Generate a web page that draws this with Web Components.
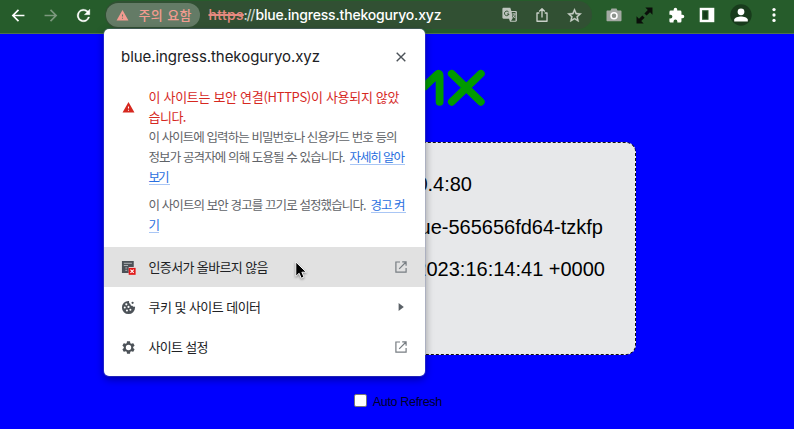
<!DOCTYPE html>
<html lang="ko"><head><meta charset="utf-8"><title>blue.ingress.thekoguryo.xyz</title>
<style>html,body{margin:0;height:100%;overflow:hidden;background:#00f}</style></head>
<body><browser-window></browser-window>
<script>
const define=(name,html,init)=>customElements.define(name,class extends HTMLElement{
  constructor(){super();this.attachShadow({mode:'open'}).innerHTML=html}
  connectedCallback(){if(init)init(this)}
});

// One line of text, tracked so that it fills the width in its "w" attribute.
define('fit-line','<style>:host{display:inline-block;white-space:pre;flex:none}span{display:inline-block}:host([struck]) span{text-decoration:line-through;text-decoration-thickness:1.5px}</style><span><slot></slot></span>',el=>{
  const s=el.shadowRoot.querySelector('span'),w=+el.getAttribute('w');
  const n=[...el.textContent].length;
  const natural=s.getBoundingClientRect().width;
  s.style.letterSpacing=((w-natural)/Math.max(1,n-1))+'px';
  el.style.width=w+'px';
});

const icons={
 back:[20,'<path d="M17 10H3.500M10 3.400 3.400 10l6.600 6.600" fill="none" stroke="currentColor" stroke-width="2"/>'],
 forward:[20,'<path d="M3 10h13.500M10 3.400l6.600 6.600-6.600 6.600" fill="none" stroke="currentColor" stroke-width="2"/>'],
 reload:[24,'<path fill="currentColor" stroke="currentColor" stroke-width=".4" d="M17.65 6.35A8 8 0 1 0 19.73 14h-2.08A6 6 0 1 1 12 6c1.66 0 3.14.69 4.22 1.78L13 11h7V4z"/>'],
 warn:[24,'<path fill="currentColor" d="M1 21h22L12 2zm12-3h-2v-2h2zm0-4h-2v-4h2z"/>'],
 translate:[16,'<path fill="#bfc6bf" d="M1.3.8h7l1.1 3.1h4.3c.7 0 1.2.5 1.2 1.2v8.5c0 .7-.5 1.2-1.2 1.2H8l-1-3H1.5C.8 11.800.4 11.300.4 10.600V1.9C.4 1.200.7.8 1.3.8z"/><path fill="#315033" d="M9.700 5h3.800v8.700H9l1.600-2.100z"/><path d="M6.600 5A2.300 2.300 0 1 0 7 7H4.900" fill="none" stroke="#315033" stroke-width="1"/><path d="M10.200 7h3.500M12 6v1M13 7.200l-2.300 3.600M11 8.400l2 2.600" fill="none" stroke="#bfc6bf" stroke-width=".9"/>'],
 share:[16,'<path d="M5.300 6H3v8.200h10V6h-2.300M8 10.500V2M5.200 4.600 8 1.800l2.800 2.800" fill="none" stroke="currentColor" stroke-width="1.35" stroke-linejoin="round"/>'],
 star:[24,'<path fill="currentColor" stroke="currentColor" stroke-width=".5" d="m22 9.240-7.190-.62L12 2 9.190 8.630 2 9.240l5.460 4.730L5.820 21 12 17.270 18.180 21l-1.630-7.030zM12 15.400l-3.760 2.270 1-4.280-3.320-2.880 4.380-.38L12 6.100l1.710 4.040 4.380.38-3.320 2.880 1 4.280z"/>'],
 camera:[16,'<path fill="#a4aaa4" d="M1.500 3.500h3l1-1.900h5l1 1.900h3c.6 0 1 .4 1 1v8.800c0 .6-.4 1-1 1h-13c-.6 0-1-.4-1-1V4.500c0-.6.4-1 1-1z"/><circle cx="8" cy="8.800" r="3" fill="#8c938c" stroke="#fff" stroke-width="1.500"/>'],
 expand:[16,'<path fill="#0a0e0a" d="M8.800.5h6.700v6.700l-2.300-2.300-3.200 3.200L7.900 6l3.200-3.200zM7.200 15.500H.5V8.800l2.300 2.300L6 7.900 8.100 10l-3.200 3.200z"/>'],
 puzzle:[24,'<path fill="currentColor" d="M20.500 11H19V7a2 2 0 0 0-2-2h-4V3.500a2.500 2.500 0 0 0-5 0V5H4a2 2 0 0 0-2 2v3.800h1.500a2.700 2.700 0 0 1 0 5.400H2V20c0 1.100.9 2 2 2h3.800v-1.500a2.700 2.700 0 0 1 5.400 0V22H17a2 2 0 0 0 2-2v-4h1.500a2.500 2.500 0 0 0 0-5z"/>'],
 panel:[16,'<path fill="#fff" d="M.7.800h14.600v14.400H.700z"/><path fill="#265c2b" d="M3.100 3.200h6.400v9.600H3.100z"/><path fill="#153c19" d="M4.300 4.300h4v7.400h-4z"/>'],
 avatar:[22,'<circle cx="11" cy="11" r="10.700" fill="#183b1c"/><circle cx="11" cy="7.800" r="3.400" fill="#fff"/><path fill="#fff" d="M4.200 17.400v-1.600c0-2.200 4.300-3.400 6.800-3.400s6.800 1.200 6.800 3.400v1.600z"/>'],
 dots:[16,'<g fill="#fff"><circle cx="8" cy="2.600" r="1.650"/><circle cx="8" cy="8" r="1.650"/><circle cx="8" cy="13.400" r="1.650"/></g>'],
 close:[12,'<path d="m1.700 1.700 8.600 8.600m0-8.600-8.600 8.600" fill="none" stroke="currentColor" stroke-width="1.400"/>'],
 cert:[16,'<path fill="#4c5258" d="M1 1h12.600v6.500H8.200v6.300H1z"/><path d="M3 3.500h8.600M3 5.900h4.500M4.600 8.500h2M4.600 11h2" stroke="#c3c5c7" stroke-width=".9"/><path fill="#e21818" d="M8.200 8.400h7.400v7.400H8.200z"/><path d="m10.100 10.300 3.500 3.500m0-3.500-3.500 3.500" stroke="#fff" stroke-width="1.200"/>'],
 cookie:[24,'<path fill="#4c5258" d="M12 1.500A10.500 10.500 0 1 0 22.500 12c0-.6 0-1.100-.1-1.600-1.300 1-3.500.6-4-1.200-2 .5-3.700-1-3.300-3-1.900-.4-2.700-2.200-2.100-4.600z"/><g fill="#fff"><circle cx="8.500" cy="6.900" r="1.700"/><circle cx="6" cy="12" r="1.600"/><circle cx="12" cy="11" r="1.700"/><circle cx="9.500" cy="16.700" r="1.700"/><circle cx="15" cy="15.400" r="1.600"/></g><circle cx="18.500" cy="4.500" r="1.800" fill="#4c5258"/>'],
 gear:[24,'<path fill="#4c5258" fill-rule="evenodd" d="M19.430 12.980c.04-.32.07-.64.07-.98s-.03-.66-.07-.98l2.110-1.650c.19-.15.24-.42.12-.64l-2-3.460c-.12-.22-.39-.3-.61-.22l-2.490 1c-.52-.4-1.080-.73-1.690-.98l-.38-2.650A.49.490 0 0 0 14 2h-4c-.25 0-.46.18-.49.42l-.38 2.650c-.61.25-1.170.59-1.690.98l-2.490-1c-.23-.09-.49 0-.61.22l-2 3.460c-.13.22-.07.49.12.64l2.110 1.650c-.04.32-.07.65-.07.98s.03.66.07.98l-2.110 1.650c-.19.15-.24.42-.12.64l2 3.460c.12.22.39.3.61.22l2.490-1c.52.4 1.080.73 1.690.98l.38 2.650c.03.24.24.42.49.42h4c.25 0 .46-.18.49-.42l.38-2.650c.61-.25 1.170-.59 1.690-.98l2.490 1c.23.09.49 0 .61-.22l2-3.460c.12-.22.07-.49-.12-.64zM12 16.300a4.300 4.300 0 1 1 0-8.600 4.300 4.300 0 0 1 0 8.600z"/>'],
 open:[12,'<path d="M5 1H.9v10.200h10.200V7M7.200.9h3.900v3.900M11 1 4.200 7.800" fill="none" stroke="#777d82" stroke-width="1.200"/>'],
 play:[12,'<path fill="#5b6167" d="M3.600 2.100v7.800L8.800 6z"/>'],
 cursor:[20,'<path d="M4 1v15.200l3.500-3.300 2.200 5.200 2.900-1.200-2.200-5.100h4.700z" fill="#000" stroke="#fff" stroke-width="1"/>']
};
define('ui-icon','<style>:host{display:block;flex:none}svg{display:block}</style><div></div>',el=>{
  const [v,p]=icons[el.getAttribute('name')],s=el.getAttribute('size');
  el.shadowRoot.querySelector('div').innerHTML=`<svg width="${s}" height="${s}" viewBox="0 0 ${v} ${v}">${p}</svg>`;
});

define('address-bar',`<style>
:host{display:flex;align-items:center;width:487px;height:28px;box-sizing:border-box;border-radius:14px;background:#315033;padding:0 9px 0 1px;color:#c9d0c9}
.chip{display:flex;align-items:center;box-sizing:border-box;width:94px;height:24px;border-radius:12px;background:#647b66;color:#f29b90;padding-left:10px;gap:9.500px;font:500 13px/24px "Noto Sans CJK KR",sans-serif}
.url{display:flex;margin-left:8.500px;font:500 14px/24px Inter,sans-serif;flex:1}
.bad{color:#e58a80}.host{color:#fff}
.icons{display:flex;gap:16px}
</style><div class="chip"><ui-icon name="warn" size="13"></ui-icon><fit-line w="53">주의 요함</fit-line></div>
<div class="url"><fit-line struck class="bad" w="35">https</fit-line><fit-line w="12">://</fit-line><fit-line class="host" w="186">blue.ingress.thekoguryo.xyz</fit-line></div>
<div class="icons"><ui-icon name="translate" size="16"></ui-icon><ui-icon name="share" size="16"></ui-icon><ui-icon name="star" size="17"></ui-icon></div>`);

define('browser-toolbar',`<style>
:host{display:flex;align-items:center;height:34px;box-sizing:border-box;background:#265c2b;border-bottom:1px solid #4d704f;padding:0 12px 3px 10px;color:#fff}
.nav{display:flex;align-items:center;gap:15px;width:95px}.dim{color:#7c987e}
.ext{display:flex;align-items:center;margin-left:14px;flex:1;justify-content:space-between}
</style><div class="nav"><ui-icon name="back" size="17"></ui-icon><ui-icon class="dim" name="forward" size="17"></ui-icon><ui-icon name="reload" size="19"></ui-icon></div>
<address-bar></address-bar>
<div class="ext"><ui-icon name="camera" size="16"></ui-icon><ui-icon name="expand" size="17"></ui-icon><ui-icon name="puzzle" size="17"></ui-icon><ui-icon name="panel" size="16"></ui-icon><ui-icon name="avatar" size="22"></ui-icon><ui-icon name="dots" size="16"></ui-icon></div>`);

define('server-page',`<style>
:host{display:flex;flex-direction:column;align-items:center;height:395px;background:#00f;font-family:"Liberation Sans",sans-serif}
.logo{display:block;margin-top:35px;width:178px;height:38px}
.card{box-sizing:border-box;width:478px;height:213px;margin-top:35px;border:1px dashed #111;border-radius:10px;background:#e7e8ea;padding:20px 30px 0;display:flex;flex-direction:column;align-items:flex-end;font-size:20px;line-height:42.500px;color:#000}
.card div{white-space:pre}
.a{margin-right:133px}.b{margin-right:2px}
.check{display:flex;align-items:center;height:18px;margin:37px 0 0 2px;color:#00002c;font-size:12.500px;gap:6px}
.check fit-line{margin-top:2px}
.check i{display:block;box-sizing:border-box;width:13px;height:13px;border:1px solid #777;border-radius:2px;background:#fff;margin-top:-2px}
</style><svg class="logo" viewBox="0 0 178 38"><path d="M112.500 32V6L123 17.500 135 6q2.800-2.500 2.800 1V33M150 5l29 28M179 5 150 33" transform="translate(-6.200 -.2)" fill="none" stroke="#009a00" stroke-width="7.800" stroke-linecap="round" stroke-linejoin="round"/></svg>
<div class="card"><div class="a">0.4:80</div><div class="b">blue-565656fd64-tzkfp</div><div>2023:16:14:41 +0000</div></div>
<div class="check"><i></i><fit-line w="69.500">Auto Refresh</fit-line></div>`);

define('menu-row',`<style>
:host{display:flex;align-items:center;height:40px;box-sizing:border-box;padding:0 18px 0 17px;color:#202124;font:400 13px/20px "Noto Sans CJK KR",sans-serif}
:host([active]){background:#e1e1e1}.t{flex:1;margin-left:12.500px}
</style><slot name="icon"></slot><div class="t"><slot></slot></div><slot name="end"></slot>`);

define('site-info-popover',`<style>
:host{display:block;position:absolute;left:104px;top:29px;width:320.500px;height:347px;box-sizing:border-box;background:#fff;border-radius:5px;box-shadow:0 0 0 1px #7b86c540,0 3px 9px #0006;font:400 12.500px/20px "Noto Sans CJK KR",sans-serif;color:#5f6368}
header{display:flex;align-items:center;justify-content:space-between;height:56px;padding:0 18px 0 17px;color:#202124;font:400 15px/20px Inter,sans-serif}
header ui-icon{color:#4c5258}
.warn{display:flex;padding-left:18px;height:162px}
.warn>ui-icon{color:#d6281f;margin-top:16px}
.body{margin-left:13.500px;padding-top:2px}
.line{display:flex;height:20px;gap:4px}.red{color:#d6281f;font-size:13px}.gap{margin-top:8px}
.link{color:#2a6fe0;height:17.500px;box-sizing:border-box;border-bottom:1px solid #a9c6f5}
</style>
<header><fit-line w="199">blue.ingress.thekoguryo.xyz</fit-line><ui-icon name="close" size="12"></ui-icon></header>
<div class="warn"><ui-icon name="warn" size="13"></ui-icon><div class="body">
<div class="line red"><fit-line w="251">이 사이트는 보안 연결(HTTPS)이 사용되지 않았</fit-line></div>
<div class="line red"><fit-line w="38">습니다.</fit-line></div>
<div class="line"><fit-line w="249">이 사이트에 입력하는 비밀번호나 신용카드 번호 등의</fit-line></div>
<div class="line"><fit-line w="197">정보가 공격자에 의해 도용될 수 있습니다.</fit-line><fit-line class="link" w="55.500">자세히 알아</fit-line></div>
<div class="line"><fit-line class="link" w="21">보기</fit-line></div>
<div class="line gap"><fit-line w="218">이 사이트의 보안 경고를 끄기로 설정했습니다.</fit-line><fit-line class="link" w="35">경고 켜</fit-line></div>
<div class="line"><fit-line class="link" w="10">기</fit-line></div>
</div></div>
<menu-row active><ui-icon slot="icon" name="cert" size="15"></ui-icon><fit-line w="120">인증서가 올바르지 않음</fit-line><ui-icon slot="end" name="open" size="12"></ui-icon></menu-row>
<menu-row><ui-icon slot="icon" name="cookie" size="15"></ui-icon><fit-line w="112.500">쿠키 및 사이트 데이터</fit-line><ui-icon slot="end" name="play" size="12"></ui-icon></menu-row>
<menu-row><ui-icon slot="icon" name="gear" size="15"></ui-icon><fit-line w="60">사이트 설정</fit-line><ui-icon slot="end" name="open" size="12"></ui-icon></menu-row>`);

define('browser-window',`<style>:host{display:block;position:relative;width:794px;height:429px;overflow:hidden}
.cursor{position:absolute;left:292px;top:261px;filter:drop-shadow(0 1px 1px #0006)}</style>
<browser-toolbar></browser-toolbar><server-page></server-page><site-info-popover></site-info-popover><ui-icon class="cursor" name="cursor" size="19"></ui-icon>`);
</script></body></html>
